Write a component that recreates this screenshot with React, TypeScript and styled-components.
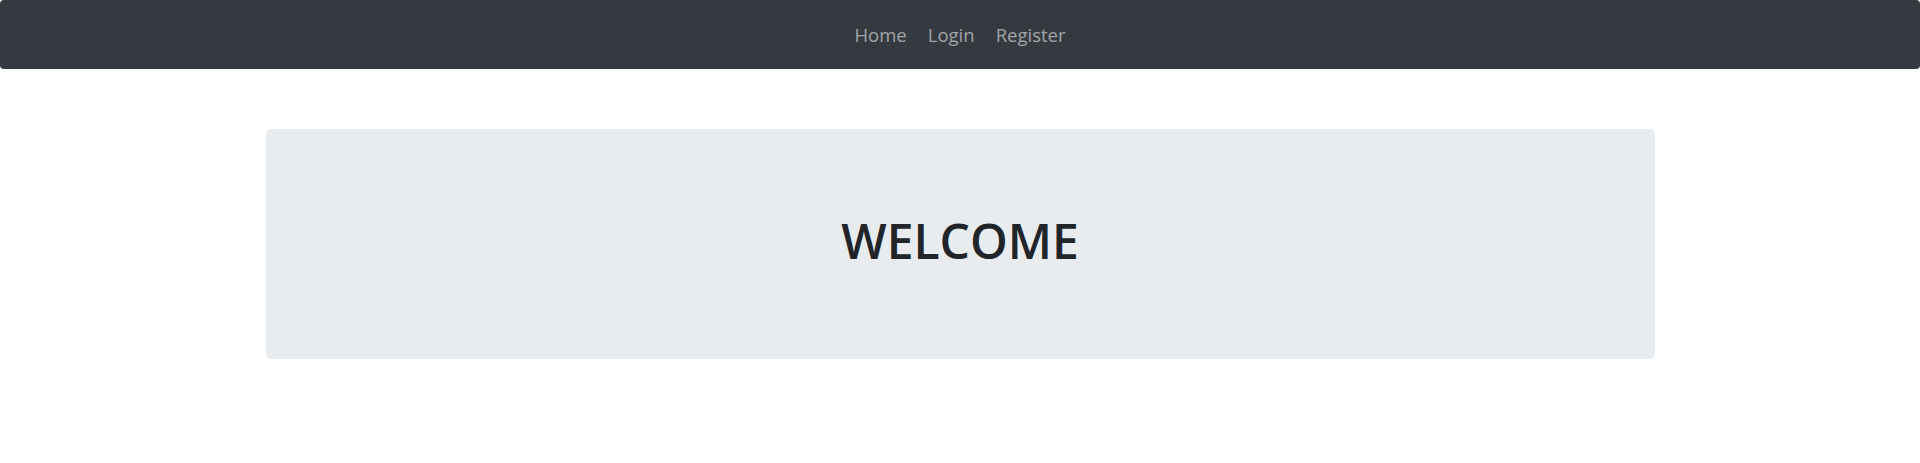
import React from "react";
import styled, { createGlobalStyle } from "styled-components";

const Global = createGlobalStyle`
  html, body { margin: 0; padding: 0; background: #fff; }
  body { font-family: "Open Sans", "Noto Sans", Arial, sans-serif; color: #212529; }
  * { box-sizing: border-box; }
`;

const NavBar = styled.nav`
  height: 69px;
  background: #343a40;
  border-radius: 4px;
  display: flex;
  align-items: center;
  justify-content: center;
`;

const NavList = styled.ul`
  list-style: none;
  margin: 0;
  padding: 0;
  display: flex;
`;

const NavLink = styled.a`
  display: block;
  padding: 0 10.5px;
  font-size: 18.5px;
  color: rgba(255, 255, 255, 0.55);
  text-decoration: none;
  line-height: 1.5;
`;

const Jumbotron = styled.section`
  width: 1389px;
  height: 230px;
  margin: 60px auto 0;
  background: #e9ecef;
  border-radius: 5px;
  display: flex;
  align-items: center;
  justify-content: center;
  padding-bottom: 6px;
`;

const Title = styled.h1`
  margin: 0;
  font-size: 48px;
  font-weight: 600;
  color: #212529;
  line-height: 1.2;
`;

export default function App() {
  return (
    <>
      <Global />
      <NavBar>
        <NavList>
          <li><NavLink href="#">Home</NavLink></li>
          <li><NavLink href="#">Login</NavLink></li>
          <li><NavLink href="#">Register</NavLink></li>
        </NavList>
      </NavBar>
      <Jumbotron>
        <Title>WELCOME</Title>
      </Jumbotron>
    </>
  );
}
